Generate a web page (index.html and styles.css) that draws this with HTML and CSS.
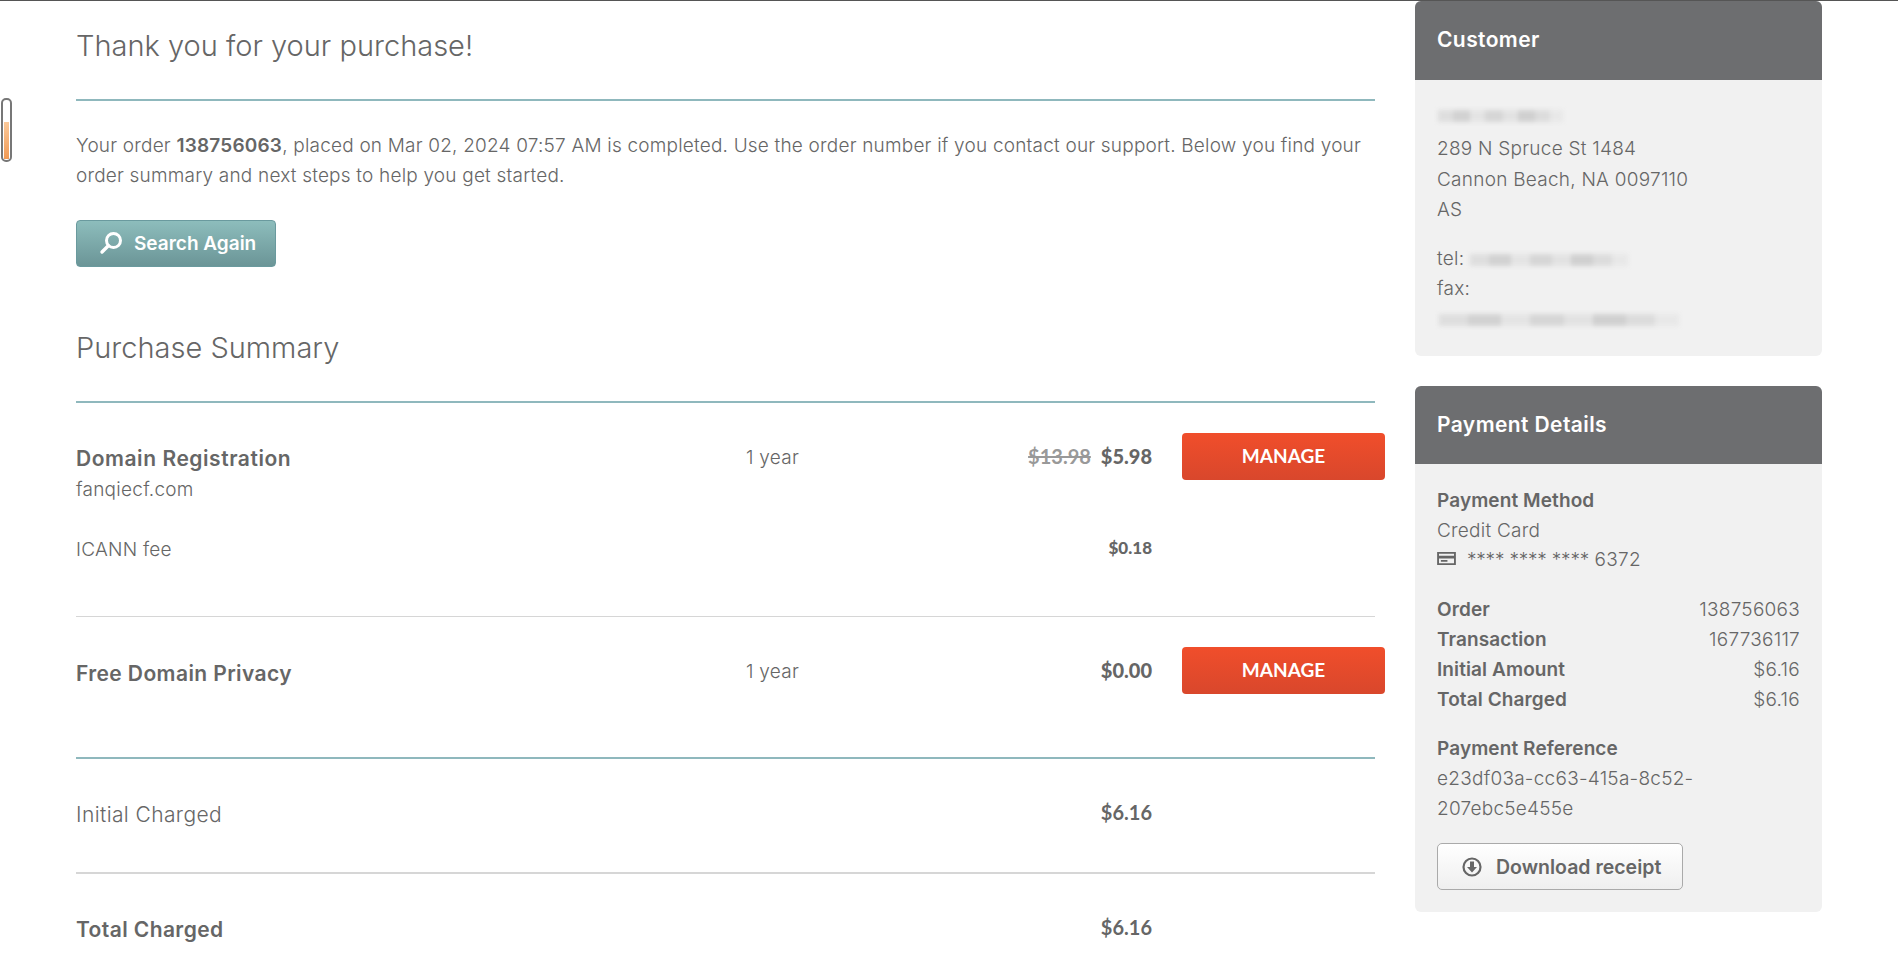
FILE: index.html
```html
<!DOCTYPE html>
<html lang="en">
<head>
<meta charset="utf-8">
<title>Thank you for your purchase</title>
<link rel="stylesheet" href="styles.css">
</head>
<body>
<div class="scroll-tab"><div class="scroll-fill"></div></div>
<div class="page">
  <main class="main">
    <h1 class="heading heading-first">Thank you for your purchase!</h1>
    <p class="intro">Your order <b>138756063</b>, placed on Mar 02, 2024 07:57 AM is completed. Use the order number if you contact our support. Below you find your order summary and next steps to help you get started.</p>
    <a class="btn-search">
      <svg class="icon-search" viewBox="0 0 24 24" width="24" height="24"><circle cx="14.500" cy="9.500" r="7" fill="none" stroke="#fff" stroke-width="3"/><path d="M9.300 14.700 3 21" fill="none" stroke="#fff" stroke-width="3.400" stroke-linecap="round"/></svg>
      <span>Search Again</span>
    </a>
    <h2 class="heading heading-second">Purchase Summary</h2>

    <section class="lines">
      <div class="line line-domain">
        <div class="line-name"><strong>Domain Registration</strong><span>fanqiecf.com</span></div>
        <div class="line-term">1 year</div>
        <div class="line-price"><s>$13.98</s><b>$5.98</b></div>
        <a class="btn-manage">MANAGE</a>
      </div>
      <div class="line line-fee">
        <div class="line-fee-name">ICANN fee</div>
        <div class="line-term"></div>
        <div class="line-price small"><b>$0.18</b></div>
      </div>
      <div class="line line-privacy">
        <div class="line-name"><strong>Free Domain Privacy</strong></div>
        <div class="line-term">1 year</div>
        <div class="line-price"><b>$0.00</b></div>
        <a class="btn-manage">MANAGE</a>
      </div>
    </section>

    <section class="totals">
      <div class="total total-initial"><span>Initial Charged</span><b>$6.16</b></div>
      <div class="total total-final"><strong>Total Charged</strong><b>$6.16</b></div>
    </section>
  </main>

  <aside class="side">
    <section class="card card-customer">
      <h3 class="card-head">Customer</h3>
      <div class="card-body">
        <div class="redact redact-name"></div>
        <div class="addr">289 N Spruce St 1484</div>
        <div class="addr">Cannon Beach, NA 0097110</div>
        <div class="addr">AS</div>
        <div class="contact">tel: <span class="redact redact-tel"></span></div>
        <div class="addr">fax:</div>
        <div class="redact redact-fax"></div>
      </div>
    </section>

    <section class="card card-payment">
      <h3 class="card-head">Payment Details</h3>
      <div class="card-body">
        <div class="label">Payment Method</div>
        <div class="value">Credit Card</div>
        <div class="value card-num">
          <svg viewBox="0 0 20 16" width="19" height="15"><path fill="#666" fill-rule="evenodd" d="M0 1h20v14H0zM2 3v2h16V3zM2 8v5h16V8zM4 9.500h7v2H4z"/></svg>
          <span><span class="stars">**** **** ****</span> 6372</span>
        </div>
        <dl class="facts">
          <div><dt>Order</dt><dd>138756063</dd></div>
          <div><dt>Transaction</dt><dd>167736117</dd></div>
          <div><dt>Initial Amount</dt><dd>$6.16</dd></div>
          <div><dt>Total Charged</dt><dd>$6.16</dd></div>
        </dl>
        <div class="label">Payment Reference</div>
        <div class="value ref">e23df03a-cc63-415a-8c52-<br>207ebc5e455e</div>
        <a class="btn-download">
          <svg viewBox="0 0 20 20" width="20" height="20"><circle cx="10" cy="10" r="8.500" fill="none" stroke="#666" stroke-width="2.200"/><path fill="#666" d="M8 4.500h4V10h3l-5 5.500L5 10h3z"/></svg>
          <span>Download receipt</span>
        </a>
      </div>
    </section>
  </aside>
</div>
</body>
</html>
```
FILE: styles.css
```css
* { box-sizing: border-box; }
html, body { margin: 0; height: 100%; }
body {
  height: 973px;
  overflow: hidden;
  background: #fff;
  color: #666;
  font-family: Inter, Lato, sans-serif;
  font-weight: 300;
  font-size: 19px;
  letter-spacing: .25px;
  border-top: 1px solid #555;
  position: relative;
}
.scroll-tab {
  position: absolute;
  left: 1px;
  top: 97px;
  width: 11px;
  height: 64px;
  padding: 1px;
  border: 2px solid #777;
  border-radius: 5px;
  background: #fff;
  display: flex;
  align-items: flex-end;
  justify-content: center;
}
.scroll-fill {
  width: 5px;
  height: 37px;
  background: linear-gradient(#fbc99a, #f19a55);
}
.page {
  display: flex;
  padding-left: 76px;
}
.main {
  width: 1299px;
  flex: none;
}
.side {
  width: 407px;
  margin-left: 40px;
  flex: none;
}
.heading {
  margin: 0;
  font-weight: 300;
  font-size: 29px;
  letter-spacing: 0;
  line-height: 44px;
  border-bottom: 2px solid #8fb8bd;
}
.heading-first { padding-top: 23px; padding-bottom: 31px; }
.heading-second { margin-top: 59px; padding-bottom: 31px; }
.intro {
  margin: 30px 0 0;
  line-height: 30.400px;
  letter-spacing: .2px;
}
.intro b { font-weight: 600; }
.btn-search {
  display: flex;
  align-items: center;
  gap: 11px;
  width: 200px;
  height: 47px;
  margin-top: 28px;
  padding-left: 22px;
  border: 1px solid #6a9a9e;
  border-radius: 4px;
  background: linear-gradient(#8dbdbc, #6b9597);
  color: #fff;
  font-weight: 600;
  font-size: 19px;
  letter-spacing: 0;
}
.line {
  display: grid;
  grid-template-columns: 670px 200px 206px 203px;
  align-items: start;
  width: 1309px;
  line-height: 30px;
}
.line-name strong, .total-final strong { font-weight: 600; font-size: 21px; letter-spacing: .4px; }
.line-name { margin-top: 11px; }
.line-name strong { display: block; }
.line-name span { display: block; margin-top: 1px; }
.line-term { padding-top: 10px; }
.line-price {
  display: flex;
  justify-content: flex-end;
  gap: 10px;
  padding-top: 8px;
  font-family: Lato, sans-serif;
  font-size: 20px;
  font-weight: 700;
  letter-spacing: 0;
}
.line-price s { color: #999; }
.line-price.small { font-size: 17px; padding-top: 0; line-height: 26px; }
.btn-manage {
  grid-column: 4;
  height: 47px;
  margin-left: 30px;
  width: 203px;
  display: flex;
  align-items: center;
  justify-content: center;
  border-radius: 4px;
  background: linear-gradient(#f04e2b, #d9472c);
  color: #fff;
  font-family: Lato, sans-serif;
  font-weight: 700;
  font-size: 19px;
  letter-spacing: 0;
}
.line-domain { padding-top: 30px; height: 132px; }
.line-domain strong { letter-spacing: .55px; }
.line-fee { height: 81px; }
.line-privacy {
  height: 141px;
  padding-top: 31px;
  background: linear-gradient(#d6d6d6, #d6d6d6) no-repeat 0 0 / 1299px 1px;
}
.line-privacy .line-name { margin-top: 12px; }
.totals { border-top: 2px solid #8fb8bd; width: 1299px; }
.total { display: flex; justify-content: space-between; align-items: flex-start; padding-right: 223px; }
.total b { font-family: Lato, sans-serif; font-weight: 700; font-size: 20px; letter-spacing: 0; margin-top: -2px; }
.total-initial { height: 113px; padding-top: 43px; font-size: 21px; letter-spacing: .4px; }
.total-final { border-top: 2px solid #d6d6d6; padding-top: 43px; }
.card {
  background: #f1f1f1;
  border-radius: 6px;
  overflow: hidden;
}
.card-head {
  margin: 0;
  background: #6d6e70;
  color: #fff;
  font-size: 21px;
  font-weight: 600;
  letter-spacing: .4px;
  padding: 0 22px;
}
.card-customer .card-head { height: 79px; line-height: 78px; }
.card-payment .card-head { height: 78px; line-height: 78px; }
.card-customer { height: 355px; }
.card-payment { margin-top: 30px; height: 526px; }
.card-body { padding: 0 22px; }
.card-customer .card-body { padding-top: 30px; }
.addr { line-height: 30.500px; }
.redact {
  background: linear-gradient(90deg, #dedede 0 12%, #d2d2d2 12% 26%, #e4e4e4 26% 38%, #d6d6d6 38% 52%, #e2e2e2 52% 64%, #d0d0d0 64% 78%, #dcdcdc 78% 90%, #e8e8e8 90%);
  filter: blur(2px);
}
.redact-name { width: 125px; height: 12px; margin: 0 0 12px 1px; }
.redact-tel { display: inline-block; width: 158px; height: 12px; vertical-align: -1px; }
.redact-fax { width: 240px; height: 12px; margin: 10px 0 0 2px; }
.contact { margin-top: 18px; line-height: 30px; }
.card-payment .card-body { padding-top: 22px; }
.label { font-weight: 600; line-height: 30px; letter-spacing: .1px; }
.value { line-height: 30px; }
.card-num { display: flex; align-items: center; gap: 11px; line-height: 28px; }
.card-num svg { margin-top: -4px; }
.stars { white-space: pre; letter-spacing: -.2px; }
.facts { margin: 21px 0 19px; }
.facts div { display: flex; justify-content: space-between; line-height: 30px; }
.facts dt { font-weight: 600; letter-spacing: .1px; }
.facts dd { margin: 0; }
.btn-download {
  display: flex;
  align-items: center;
  gap: 14px;
  width: 246px;
  height: 47px;
  margin-top: 19px;
  padding-left: 24px;
  border: 1px solid #aaa;
  border-radius: 5px;
  background: linear-gradient(#fff, #efefef);
  font-weight: 600;
  font-size: 19.500px;
  letter-spacing: 0;
}
```
